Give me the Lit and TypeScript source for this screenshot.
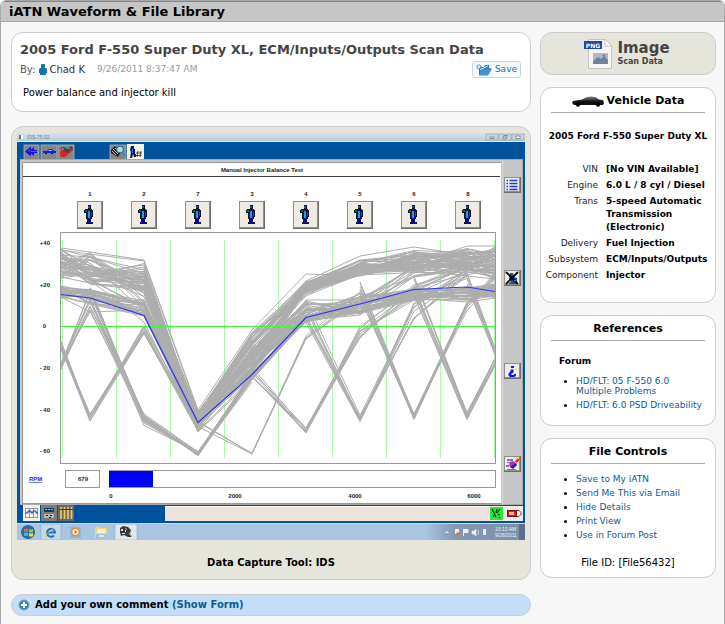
import { LitElement, html, svg, css } from "lit";
import { customElement } from "lit/decorators.js";

type Span = [number, number];

const COLUMNS = [61, 90, 144, 198, 252, 306, 360, 414, 467, 495];
const CYLINDERS = ["1", "2", "7", "3", "4", "5", "6", "8"];

// Small repeatable generator, so that the traces never change between renders.
function makeRandom(seed: number) {
  let s = seed;
  return () => {
    s = (s * 1664525 + 1013904223) % 4294967296;
    return s / 4294967296;
  };
}

interface Family {
  from: number;
  count: number;
  spans: Span[];
}

const FAMILIES: Family[] = [
  // healthy contribution, upper and lower band
  { from: 0, count: 34, spans: [[249, 280], [253, 284], [263, 294], [411, 424], [332, 368], [281, 296], [260, 275], [250, 274], [248, 273], [247, 277]] },
  { from: 0, count: 16, spans: [[249, 280], [252, 281], [275, 312], [411, 426], [340, 376], [283, 292], [264, 275], [255, 270], [250, 270], [250, 275]] },
  { from: 0, count: 28, spans: [[285, 298], [289, 305], [300, 316], [413, 427], [345, 377], [300, 323], [294, 314], [288, 301], [286, 300], [285, 299]] },
  { from: 4, count: 12, spans: [[350, 378], [315, 322], [295, 315], [262, 282], [262, 276], [262, 280]] },
  // one cylinder killed after the other
  { from: 0, count: 9, spans: [[338, 350], [413, 422], [325, 334], [423, 433], [352, 378], [300, 315]] },
  { from: 0, count: 9, spans: [[363, 370], [290, 313], [414, 427], [451, 456], [372, 380], [317, 324]] },
  { from: 1, count: 8, spans: [[284, 300], [416, 426], [451, 456], [374, 382]] },
  { from: 3, count: 4, spans: [[421, 427], [452, 455], [336, 339], [290, 300]] },
  { from: 4, count: 9, spans: [[366, 378], [428, 433], [326, 338], [280, 300], [262, 280]] },
  { from: 5, count: 9, spans: [[300, 324], [415, 422], [303, 320], [268, 276]] },
  { from: 6, count: 9, spans: [[280, 300], [413, 420], [297, 312], [270, 285]] },
  { from: 7, count: 9, spans: [[270, 296], [412, 420], [358, 366]] },
  { from: 8, count: 8, spans: [[272, 288], [347, 355]] },
];

const OUTLIERS = [
  "61,248 90,252 144,260 198,410 252,330 306,274 360,276 414,264 467,246 495,246",
  "61,250 90,254 144,261 198,412 252,338 306,281 360,256 414,247 467,255 495,249",
  "61,297 90,312 144,310 198,432 252,380 306,315 360,312 414,298 467,302 495,298",
  "61,270 90,280 144,322 198,430 252,366 306,300 360,300 414,300 467,288 495,284",
];

function buildTraces(): string[] {
  const random = makeRandom(41);
  const out: string[] = [...OUTLIERS];
  for (const family of FAMILIES) {
    for (let i = 0; i < family.count; i++) {
      out.push(
        family.spans
          .map(([a, b], k) => `${COLUMNS[family.from + k]},${Math.round((a + (b - a) * random()) * 2) / 2}`)
          .join(" "),
      );
    }
  }
  return out;
}

const TRACES = buildTraces();

const worker = (x: number, y: number) => svg`
  <g transform="translate(${x} ${y})">
    <path fill="#0a1430" d="M5 0h3v4H5zM2 4h7v2H2zM1 5h2v3H1zM8 5h2v7H8zM3 6h6v8H3zM4 14h4v3H4zM3 17h3v2H3zM6 17h4v2H6z"/>
    <path fill="#2c50a8" d="M5 1h2v2H5z"/>
    <path fill="#0b6b3a" d="M2 5h2v2H2zM8 7h1v4H8z"/>
    <path fill="#18a0e8" d="M5 6h2v7H5z"/>
    <path fill="#0a10e0" d="M4 9h1v4H4zM7 11h1v3H7zM4 17h2v1H4zM7 17h2v1H7z"/>
  </g>`;

const raised = (x: number, y: number, w: number, h: number) => svg`
  <rect x=${x} y=${y} width=${w} height=${h} fill="#6e6e6e"/>
  <rect x=${x} y=${y} width=${w - 1} height=${h - 1} fill="#8f8f8f"/>
  <rect x=${x + 1} y=${y + 1} width=${w - 3} height=${h - 3} fill="#efebe2"/>`;

@customElement("scan-capture")
class ScanCapture extends LitElement {
  static styles = css`
    :host { display: block; }
    .shot { display: block; width: 100%; height: auto; font-family: "Liberation Sans", Arial, sans-serif; }
    .label { font-size: 6px; font-weight: 700; fill: #222; }
    .mid { text-anchor: middle; }
    .end { text-anchor: end; }
    .link { fill: #22f; text-decoration: underline; }
    .small { font-size: 5px; fill: #eef3fa; }
    .caption { font-size: 5px; fill: #6d7f90; }
    .trace { fill: none; stroke: #adadad; stroke-width: 1; }
    .average { fill: none; stroke: #2a36e8; stroke-width: 1.2; }
    .zero { fill: #3cf83c; }
    .edge { fill: none; stroke: #999; }
  `;

  render() {
    return html`
      <svg class="shot" viewBox="17 133 508 407" role="img" aria-label="Manual Injector Balance Test">
        <defs>
          <linearGradient id="tray" x1="0" x2="1" y1="0" y2="0">
            <stop offset="0" stop-color="#a9c6e6"/><stop offset=".3" stop-color="#8497b2"/><stop offset="1" stop-color="#7c90ac"/>
          </linearGradient>
          <linearGradient id="bar" x1="0" x2="0" y1="0" y2="1">
            <stop offset="0" stop-color="#d6e2ee"/><stop offset="1" stop-color="#b9cddf"/>
          </linearGradient>
        </defs>
        <rect x="17" y="133" width="508" height="390" fill="#00529c"/>
        <rect x="17" y="133" width="508" height="8" fill="url(#bar)"/>
        <rect x="17" y="141" width="508" height="1" fill="#e3edf5"/>
        <rect x="19" y="135" width="4" height="4" fill="#fff"/><rect x="19" y="135" width="2" height="4" fill="#4a8090"/>
        <text class="caption" x="27" y="139">IDS-75.02</text>
        <g fill="#c8d5e2" stroke="#8c9dae" stroke-width=".6">
          <rect x="486" y="134" width="12" height="6"/><rect x="499" y="134" width="12" height="6"/><rect x="512" y="134" width="12" height="6"/>
        </g>
        <g fill="#fff" stroke="#777" stroke-width=".8">
          <rect x="490" y="137" width="4" height="1.5"/><rect x="504" y="135.500" width="3" height="2"/><rect x="503" y="137" width="3" height="2"/><rect x="516" y="136" width="4" height="2.500"/>
        </g>

        <g fill="#858585" stroke="#b5b5b5" stroke-width=".8">
          <rect x="24" y="145" width="15" height="15"/><rect x="41" y="145" width="16" height="15"/><rect x="58" y="145" width="16" height="15"/><rect x="110" y="145" width="16" height="15"/>
        </g>
        <rect x="127" y="144" width="17" height="16" fill="#f7f2e4"/>
        <path d="M25 151.500l6-5v3l3-2.500v3h3v3h-3v3l-3-2.500v3z" fill="#1010f0"/><path d="M31 151.500h6M28 151.500l3-1.500" stroke="#8c8cb8" stroke-width=".6"/>
        <path d="M43 151h4l2-2h3l2 2h2v2H43z" fill="#1420e0"/><path d="M49 150h3v1h-4z" fill="#8db8ff"/><path d="M45 153h2v1h-2zm6 0h2v1h-2z" fill="#111"/>
        <path d="M60 152l3-3 3 3 6-5 1 3-8 7h-4z" fill="#e02020"/><path d="M60 148l4-1 3 2 4-3 2 2-6 5-3-2z" fill="#444"/><path d="M62 148l2 1-1 1zM68 149l2-1v1z" fill="#ddd"/>
        <path d="M111 150l4-4 6 6-3 5-7-4z" fill="#222"/><path d="M113 149l5 5M112 151l4 4M115 148l4 4" stroke="#eee" stroke-width=".8"/>
        <circle cx="120" cy="149.500" r="3.500" fill="#a5dcf4" stroke="#356"/><path d="M122 152l3 4" stroke="#2c8cc0" stroke-width="1.500"/>
        <path d="M131 146h3v3h1v5h1v3h-2l-1-3-1 4h-2l1-6-1-2z" fill="#0a1850"/><path d="M132 149h1v4h-1z" fill="#28f"/><path d="M138 151l-1 6M141 151l-1 6M136 153h6M135.500 155.500h6" stroke="#225" stroke-width=".8"/>

        <rect x="20" y="159" width="503" height="346" fill="#a9a9a9"/>
        <rect x="20" y="160" width="502" height="344" fill="#c6c6c6"/>
        <rect x="22" y="162" width="479" height="342" fill="#989898"/>
        <rect x="23" y="163" width="478" height="340" fill="#fff"/>
        <rect x="23" y="176" width="477" height="1" fill="#44403c"/>
        <rect x="502" y="161" width="1" height="344" fill="#dcdcdc"/>
        <text class="label mid" x="262" y="172">Manual Injector Balance Test</text>

        ${CYLINDERS.map((name, i) => svg`
          <text class="label mid" x=${90 + i * 54} y="196">${name}</text>
          ${raised(77 + i * 54, 201, 26, 28)}
          ${worker(83 + i * 54, 205)}`)}

        ${[0, 1, 2, 3, 4, 5, 6, 7, 8].map((i) => svg`<rect x=${62 + i * 54} y="240" width="1" height="218" fill="#a8fba8"/>`)}
        ${TRACES.map((points) => svg`<polyline class="trace" points=${points}/>`)}
        <rect class="edge" x="60.500" y="232.500" width="435" height="231"/>
        <rect class="zero" x="61" y="326" width="434" height="1"/>
        <polyline class="average" points="61,294.500 90,298 144,315.500 198,422.500 252,374.500 306,317.500 360,304 414,289.500 467,287 495,291.500"/>
        <text class="label end" x="50" y="245">+40</text>
        <text class="label end" x="50" y="287">+20</text>
        <text class="label end" x="46" y="328">0</text>
        <text class="label end" x="50" y="370">- 20</text>
        <text class="label end" x="50" y="412">- 40</text>
        <text class="label end" x="50" y="453">- 60</text>

        <text class="label link" x="29" y="481">RPM</text>
        <rect class="edge" x="65.500" y="470.500" width="34" height="17"/>
        <text class="label mid" x="83" y="481">679</text>
        <rect class="edge" x="109.500" y="470.500" width="386" height="17"/>
        <rect x="109" y="471" width="44" height="16" fill="#0000f8"/>
        <text class="label mid" x="111" y="498">0</text>
        <text class="label mid" x="235" y="498">2000</text>
        <text class="label mid" x="355" y="498">4000</text>
        <text class="label mid" x="474" y="498">6000</text>

        ${[177, 270, 363, 456].map((y) => raised(504, y, 17, 16))}
        <g stroke="#2338e8"><path stroke-width="1.500" d="M509.500 180.500h8M509.500 183.500h8M509.500 186.500h8M509.500 189.500h8"/><path stroke-width="1.500" d="M506.500 180.500h1.500M506.500 183.500h1.500M506.500 186.500h1.500M506.500 189.500h1.500"/></g>
        <path d="M510 273h3l1 4 3 1v6h-8v-5z" fill="#234a80"/><path d="M506 272l12 12M518 272l-12 12" stroke="#080808" stroke-width="1.800"/><path d="M509 281h2v2h-2zM514 280h2v1h-2z" fill="#4a9ae0"/>
        <path d="M511 366h3v2h-3zM511 369.500h2.500v3l-2 1v1.500h2.500v-1h2v2l-2 1h-4l-1.500-1.500v-2l1.500-1.500z" fill="#1018f0"/>
        <path d="M507 459h6v2h-6zm0 3h5v1h-5zm0 7h9v1h-9zM506 465h3v2h-3z" fill="#6c78c8"/><circle cx="512.500" cy="464.500" r="3.200" fill="#d41ca8"/><path d="M510 467l3 2 4-4-1-2z" fill="#2028b0"/><path d="M515 461l4-4v4l-3 2z" fill="#e83018"/><path d="M516 458l3-1v2z" fill="#ffd040"/>

        <rect x="23" y="505" width="17" height="16" fill="#f4f0e6"/>
        <path d="M25.500 508v10M29.500 508v10M33.500 508v10M37.500 508v10M25 508.500h13M25 517.500h13" stroke="#777" stroke-width=".7"/><path d="M25 513h3v-2h3v2h2v-2h3v2h2" fill="none" stroke="#2028d0"/>
        <rect x="41" y="505" width="16" height="16" fill="#7c7c7c"/><rect x="58" y="505" width="16" height="16" fill="#6c6860"/>
        <path d="M44 508h10v4H44z" fill="#103c60"/><path d="M45 509h2v1h-2zm3 0h2v1h-2zm3 0h2v1h-2z" fill="#4cd0e8"/><path d="M44 514h10v4H44z" fill="#b8b8b8"/><path d="M46 515h2v1h-2zm4 0h2v1h-2zm-1 2h2v1h-2z" fill="#222"/>
        <path d="M61 507v12M64.500 507v12M68 507v12M71.500 507v12" stroke="#e8cc60" stroke-width="1.700"/><path d="M59 509.500h14" stroke="#4c3c18"/>
        <rect x="165" y="506" width="324" height="15" fill="#ece4dc"/><rect x="165" y="506" width="324" height="1" fill="#faf6f0"/>
        <rect x="489" y="506" width="34" height="15" fill="#efebe6"/>
        <rect x="490" y="507" width="13" height="13" fill="#28e838"/><path d="M492 509l4 8M497 509l-1 4M500 509l-3 4M500 514l-2 1M500 517l-1 1M493 515l1 2" stroke="#063c0c" stroke-width="1.200"/>
        <rect x="507.500" y="510.500" width="9" height="6" fill="#e01818" stroke="#701010"/><rect x="509" y="512" width="5" height="3" fill="#ffb0a0"/><path d="M517 510.500h2l2 2v2l-2 2h-2" fill="none" stroke="#444"/>

        <rect x="17" y="523" width="508" height="17" fill="#aac5e2"/>
        <rect x="17" y="523" width="508" height="1" fill="#c9dbea"/>
        <rect x="425" y="524" width="100" height="16" fill="url(#tray)"/>
        <rect x="41" y="524" width="20" height="16" fill="#c5d9ec" stroke="#8da8c2" stroke-width=".6"/>
        <rect x="115" y="524" width="22" height="16" fill="#dfe8f2" stroke="#8da8c2" stroke-width=".6"/>
        <circle cx="28" cy="532" r="7" fill="#2c699c"/><path d="M24 529q2-1 4 0v3q-2-1-4 0z" fill="#ee6a28"/><path d="M29 529q2 1 4 0v3q-2 1-4 0z" fill="#8cd048"/><path d="M24 533q2-1 4 0v3q-2-1-4 0z" fill="#58b4f0"/><path d="M29 533q2 1 4 0v3q-2 1-4 0z" fill="#ffd848"/>
        <path d="M47.500 532.500h7.500a4 4 0 1 0-1 3" fill="none" stroke="#1c70c8" stroke-width="2"/><path d="M46 537q-1-4 9-9" fill="none" stroke="#e8b840"/>
        <rect x="70" y="527" width="11" height="11" fill="#8cb8e0"/><circle cx="75.500" cy="532" r="4.500" fill="#f08c28"/><circle cx="75.500" cy="532" r="3" fill="#fff"/><path d="M74.500 530l3 2-3 2z" fill="#e06010"/>
        <path d="M95 527h5l1 1h6v10H95z" fill="#f0d878"/><path d="M97 529h8v4h-8z" fill="#fff4c8"/><path d="M96 534h11v4H96z" fill="#90c8e8"/><path d="M99 535h5v2h-5z" fill="#f4e8b0"/>
        <path d="M120 528l3-2 5 1 3 3-1 3 2 4h-4l-4-2-3 1-1-4z" fill="#383838"/><path d="M121 529h2v2h-2zM125 528l2 1-1 1zM122 533h3v1h-3zM127 532l1 1zM125 530h1v2h-1z" fill="#ddd"/><path d="M129 533l3 4" stroke="#e8d060"/>
        <path d="M445 533l2-2 2 2z" fill="#e8eef6"/><path d="M455 529h4v5h-4z" fill="#eee"/><circle cx="458" cy="534" r="1.800" fill="#e86830"/>
        <path d="M463.500 529v7M464 529.500h4v3h-4z" stroke="#fff" fill="#e8eef6" stroke-width=".8"/><path d="M472 531h2l2-2v7l-2-2h-2zM478 530q1 2 0 5" fill="#eee" stroke="#eee" stroke-width=".6"/><rect x="483" y="529" width="3" height="6" fill="#eee"/>
        <text class="small" x="495" y="531">10:13 AM</text>
        <text class="small" x="495" y="537">9/26/2011</text>
        <rect x="519" y="524" width="6" height="16" fill="#5c6e88"/>
      </svg>`;
  }
}

@customElement("app-root")
class AppRoot extends LitElement {
  static styles = css`
    :host { display: block; background: #fff; font-family: "DejaVu Sans", Verdana, sans-serif; font-size: 9px; line-height: 13px; color: #000; }
    * { box-sizing: border-box; }
    h1, h2, h3, p, ul, dl, dd, dt, figure { margin: 0; padding: 0; }
    a { color: #0d5a96; text-decoration: none; }
    .page { border: 1px solid #a8a8a8; border-radius: 6px 6px 0 0; background: #f7f7f7; overflow: hidden; }
    .top { background: #c6c6c6; border-top: 1px solid #858585; border-bottom: 1px solid #a6a6a6; padding: 2px 8px 1px; font-size: 13px; line-height: 16px; font-weight: 700; }
    .body { display: grid; grid-template-columns: minmax(0, 1fr) 176px; gap: 9px; padding: 10px 8px 8px 10px; align-items: start; }
    .main { display: grid; gap: 14px; }
    .side { display: grid; gap: 12px; }
    .card { background: #fff; border: 1px solid #ccc; border-radius: 12px; }
    .tan { background: #e6e5dc; }
    .intro { padding: 8px 9px 11px 8px; }
    .name { font-size: 13px; line-height: 18px; color: #444; }
    .byline { display: flex; align-items: center; height: 21px; font-size: 10px; color: #555; }
    .user { display: inline-flex; align-items: center; gap: 2px; margin-left: 4px; color: #333; }
    .date { font-size: 9px; color: #999; margin-left: 12px; }
    .save { display: flex; align-items: center; gap: 3px; margin-left: auto; padding: 0 3px; height: 17px; background: #f4f9fd; border: 1px solid #c3d3de; border-radius: 3px; font: inherit; font-size: 9px; color: #2b6ca3; }
    .text { padding: 6px 3px 0; font-size: 10px; line-height: 14px; }
    .capture { padding: 6px 5px 9px; }
    .capture figcaption { padding-top: 16px; text-align: center; font-size: 10px; line-height: 14px; font-weight: 700; }
    .comment { display: flex; align-items: center; gap: 5px; padding: 3px 6px; background: #c4defa; font-size: 10px; line-height: 14px; font-weight: 700; }
    .kind { display: flex; justify-content: center; align-items: center; gap: 4px; height: 43px; padding-right: 2px; color: #444; font-weight: 700; }
    .kind .big { font-size: 15px; line-height: 16px; }
    .kind .sub { font-size: 8px; line-height: 11px; }
    .panel { padding: 5px 10px 0; }
    .panel h2 { display: flex; justify-content: center; align-items: center; gap: 3px; font-size: 11px; line-height: 16px; padding-bottom: 3px; border-bottom: 1px solid #aaa; }
    .model { margin: 15px -10px 19px; text-align: center; font-size: 9px; line-height: 16px; white-space: nowrap; }
    .facts { display: grid; grid-template-columns: 57px minmax(0, 1fr); gap: 3px 8px; margin: 0 -10px; padding-bottom: 20px; }
    .facts dt { text-align: right; color: #222; }
    .facts dd { font-weight: 700; }
    .forum { margin: 13px 8px 0; font-size: 9px; line-height: 14px; }
    .links { list-style: disc; padding-left: 25px; display: grid; }
    .refs { gap: 4px; padding-top: 8px; padding-bottom: 15px; line-height: 10px; }
    .controls { gap: 1px; padding-top: 9px; }
    .fileid { padding: 14px 0 7px; text-align: center; font-size: 10px; line-height: 14px; }
  `;

  render() {
    return html`
      <div class="page">
        <header class="top">iATN Waveform &amp; File Library</header>
        <div class="body">
          <main class="main">
            <section class="card intro">
              <h1 class="name">2005 Ford F-550 Super Duty XL, ECM/Inputs/Outputs Scan Data</h1>
              <div class="byline">
                <span>By:</span>
                <span class="user">
                  <svg width="8" height="11" viewBox="0 0 8 11" fill="#0c73b4" aria-hidden="true"><rect x="2" width="4" height="4" rx="1"/><path d="M0 5.500Q0 4 1.500 4h5Q8 4 8 5.500V9H7v2H1V9H0z"/></svg>
                  Chad K
                </span>
                <span class="date">9/26/2011 8:37:47 AM</span>
                <button class="save" type="button">
                  <svg width="16" height="12" viewBox="0 0 16 12" aria-hidden="true"><path d="M3 3h5l1-2 4 0v3h2l-3 7H3z" fill="#2f78b4"/><path d="M5 5h11l-4 6.500H3z" fill="#4a90c8"/><path d="M4 5.500L12 2" stroke="#e8f3fb"/><path d="M3 0v6M0 3h6M1 1l4 4M5 1L1 5" stroke="#4a90c8" stroke-width=".9"/><circle cx="3" cy="3" r="1" fill="#fff"/></svg>
                  Save
                </button>
              </div>
              <p class="text">Power balance and injector kill</p>
            </section>

            <figure class="card tan capture">
              <scan-capture></scan-capture>
              <figcaption>Data Capture Tool: IDS</figcaption>
            </figure>

            <section class="card comment">
              <svg width="12" height="12" viewBox="0 0 12 12" aria-hidden="true"><circle cx="6" cy="6" r="5" fill="#3d86b8" stroke="#7d9cb4"/><path d="M6 3v6M3 6h6" stroke="#fff" stroke-width="2"/></svg>
              <span>Add your own comment <a href="#comment">(Show Form)</a></span>
            </section>
          </main>

          <aside class="side">
            <section class="card tan kind">
              <svg width="29" height="32" viewBox="0 0 29 32" aria-hidden="true">
                <path d="M4.500 1.500h17l6 6v23h-23z" fill="#f6f6f4" stroke="#c4c4c0"/><path d="M21 1v7h7z" fill="#fff" stroke="#b8b8b4" stroke-width=".8"/>
                <rect x="9" y="15" width="15" height="11" fill="#a9b9c8"/><path d="M9 23l5-4 3 2 3-3 4 4v4H9z" fill="#6d8499"/><circle cx="20" cy="17.500" r="1.500" fill="#72889c"/>
                <rect x="0" y="3" width="18" height="8" fill="#2646a8"/><text x="9" y="9.500" font-size="6" font-weight="700" text-anchor="middle" fill="#fff">PNG</text>
              </svg>
              <div><div class="big">Image</div><div class="sub">Scan Data</div></div>
            </section>

            <section class="card panel">
              <h2>
                <svg width="32" height="11" viewBox="0 0 32 11" aria-hidden="true"><defs><linearGradient id="paint" x1="0" x2="0" y1="0" y2="1"><stop offset="0" stop-color="#888"/><stop offset=".6" stop-color="#111"/></linearGradient></defs><path d="M0 7l1-2 9-1.500Q15 0 20 .5q4 0 7 3l4 .5 1 3-1 2H2z" fill="url(#paint)"/><circle cx="6" cy="8.500" r="2.200"/><circle cx="26" cy="8.500" r="2.200"/></svg>
                Vehicle Data
              </h2>
              <h3 class="model">2005 Ford F-550 Super Duty XL</h3>
              <dl class="facts">
                <dt>VIN</dt><dd>[No VIN Available]</dd>
                <dt>Engine</dt><dd>6.0 L / 8 cyl / Diesel</dd>
                <dt>Trans</dt><dd>5-speed Automatic Transmission (Electronic)</dd>
                <dt>Delivery</dt><dd>Fuel Injection</dd>
                <dt>Subsystem</dt><dd>ECM/Inputs/Outputs</dd>
                <dt>Component</dt><dd>Injector</dd>
              </dl>
            </section>

            <section class="card panel">
              <h2>References</h2>
              <h3 class="forum">Forum</h3>
              <ul class="links refs">
                <li><a href="#thread-1">HD/FLT: 05 F-550 6.0 Multiple Problems</a></li>
                <li><a href="#thread-2">HD/FLT: 6.0 PSD Driveability</a></li>
              </ul>
            </section>

            <section class="card panel">
              <h2>File Controls</h2>
              <ul class="links controls">
                <li><a href="#save">Save to My iATN</a></li>
                <li><a href="#email">Send Me This via Email</a></li>
                <li><a href="#details">Hide Details</a></li>
                <li><a href="#print">Print View</a></li>
                <li><a href="#post">Use in Forum Post</a></li>
              </ul>
              <p class="fileid">File ID: [File56432]</p>
            </section>
          </aside>
        </div>
      </div>`;
  }
}
